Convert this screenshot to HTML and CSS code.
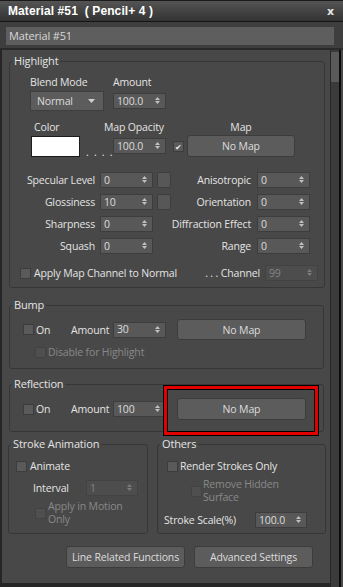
FILE: index.html
```html
<!DOCTYPE html>
<html lang="en">
<head>
    <meta charset="UTF-8">
    <meta name="viewport" content="width=device-width, initial-scale=1.0">
    <title>Material #51 - Pencil+ 4</title>
    <link rel="stylesheet" href="styles.css">
</head>
<body>

<div class="window">
    <div class="titlebar">
        <span class="title">Material #51&nbsp; ( Pencil+ 4 )</span>
        <span class="close">x</span>
    </div>
    <div class="namebar">
        <div class="namefield">Material #51</div>
    </div>

    <div class="main">
        <div class="panel">

            <fieldset class="group">
                <legend>Highlight</legend>
                <div class="hl-r1">
                    <span class="blend-lbl">Blend Mode</span>
                    <span>Amount</span>
                </div>
                <div class="hl-r2">
                    <div class="dropdown">Normal
                        <svg class="drop-arrow" viewBox="0 0 7 4"><path d="M0 0H7L3.5 4Z"/></svg>
                    </div>
                    <div class="spin amount-spin"><span>100.0</span><svg class="arrows" viewBox="0 0 5 9"><path d="M0 4L2.5 1L5 4ZM0 5L2.5 8L5 5Z"/></svg></div>
                </div>
                <div class="hl-r3">
                    <span class="color-lbl">Color</span>
                    <span class="opacity-lbl">Map Opacity</span>
                    <span class="map-lbl">Map</span>
                </div>
                <div class="hl-r4">
                    <div class="swatch"></div>
                    <span class="dots">. . . .</span>
                    <div class="spin opacity-spin"><span>100.0</span><svg class="arrows" viewBox="0 0 5 9"><path d="M0 4L2.5 1L5 4ZM0 5L2.5 8L5 5Z"/></svg></div>
                    <div class="cb checked">&#10004;</div>
                    <button class="btn map-btn">No Map</button>
                </div>

                <div class="params">
                    <span class="plbl">Specular Level</span>
                    <div class="spin"><span>0</span><svg class="arrows" viewBox="0 0 5 9"><path d="M0 4L2.5 1L5 4ZM0 5L2.5 8L5 5Z"/></svg></div>
                    <div class="mapbox"></div>
                    <span class="plbl right">Anisotropic</span>
                    <div class="spin"><span>0</span><svg class="arrows" viewBox="0 0 5 9"><path d="M0 4L2.5 1L5 4ZM0 5L2.5 8L5 5Z"/></svg></div>

                    <span class="plbl">Glossiness</span>
                    <div class="spin"><span>10</span><svg class="arrows" viewBox="0 0 5 9"><path d="M0 4L2.5 1L5 4ZM0 5L2.5 8L5 5Z"/></svg></div>
                    <div class="mapbox"></div>
                    <span class="plbl right">Orientation</span>
                    <div class="spin"><span>0</span><svg class="arrows" viewBox="0 0 5 9"><path d="M0 4L2.5 1L5 4ZM0 5L2.5 8L5 5Z"/></svg></div>

                    <span class="plbl">Sharpness</span>
                    <div class="spin"><span>0</span><svg class="arrows" viewBox="0 0 5 9"><path d="M0 4L2.5 1L5 4ZM0 5L2.5 8L5 5Z"/></svg></div>
                    <span></span>
                    <span class="plbl right">Diffraction Effect</span>
                    <div class="spin"><span>0</span><svg class="arrows" viewBox="0 0 5 9"><path d="M0 4L2.5 1L5 4ZM0 5L2.5 8L5 5Z"/></svg></div>

                    <span class="plbl">Squash</span>
                    <div class="spin"><span>0</span><svg class="arrows" viewBox="0 0 5 9"><path d="M0 4L2.5 1L5 4ZM0 5L2.5 8L5 5Z"/></svg></div>
                    <span></span>
                    <span class="plbl right">Range</span>
                    <div class="spin"><span>0</span><svg class="arrows" viewBox="0 0 5 9"><path d="M0 4L2.5 1L5 4ZM0 5L2.5 8L5 5Z"/></svg></div>
                </div>

                <div class="channel-row">
                    <div class="cb"></div>
                    <span class="cb-text">Apply Map Channel to Normal</span>
                    <span class="chan-lbl">. . . Channel</span>
                    <div class="spin disabled chan-spin"><span>99</span><svg class="arrows" viewBox="0 0 5 9"><path d="M0 4L2.5 1L5 4ZM0 5L2.5 8L5 5Z"/></svg></div>
                </div>
            </fieldset>

            <fieldset class="group bump">
                <legend>Bump</legend>
                <div class="map-row">
                    <div class="cb"></div>
                    <span class="on-lbl">On</span>
                    <span class="amt-lbl">Amount</span>
                    <div class="spin"><span>30</span><svg class="arrows" viewBox="0 0 5 9"><path d="M0 4L2.5 1L5 4ZM0 5L2.5 8L5 5Z"/></svg></div>
                    <button class="btn wide-btn">No Map</button>
                </div>
                <div class="disable-row">
                    <div class="cb disabled"></div>
                    <span class="cb-text dim">Disable for Highlight</span>
                </div>
            </fieldset>

            <fieldset class="group reflection">
                <legend>Reflection</legend>
                <div class="map-row refl-row">
                    <div class="cb"></div>
                    <span class="on-lbl">On</span>
                    <span class="amt-lbl">Amount</span>
                    <div class="spin"><span>100</span><svg class="arrows" viewBox="0 0 5 9"><path d="M0 4L2.5 1L5 4ZM0 5L2.5 8L5 5Z"/></svg></div>
                    <button class="btn wide-btn">No Map</button>
                </div>
            </fieldset>

            <div class="split">
                <fieldset class="group stroke-anim">
                    <legend>Stroke Animation</legend>
                    <div class="animate-row">
                        <div class="cb"></div>
                        <span class="cb-text">Animate</span>
                    </div>
                    <div class="interval-row">
                        <span class="interval-lbl">Interval</span>
                        <div class="spin disabled"><span>1</span><svg class="arrows" viewBox="0 0 5 9"><path d="M0 4L2.5 1L5 4ZM0 5L2.5 8L5 5Z"/></svg></div>
                    </div>
                    <div class="motion-row">
                        <div class="cb disabled"></div>
                        <span class="cb-text dim two-line">Apply in Motion<br>Only</span>
                    </div>
                </fieldset>

                <fieldset class="group others">
                    <legend>Others</legend>
                    <div class="render-row">
                        <div class="cb"></div>
                        <span class="cb-text">Render Strokes Only</span>
                    </div>
                    <div class="hidden-row">
                        <div class="cb disabled"></div>
                        <span class="cb-text dim two-line">Remove Hidden<br>Surface</span>
                    </div>
                    <div class="scale-row">
                        <span class="scale-lbl">Stroke Scale(%)</span>
                        <div class="spin"><span>100.0</span><svg class="arrows" viewBox="0 0 5 9"><path d="M0 4L2.5 1L5 4ZM0 5L2.5 8L5 5Z"/></svg></div>
                    </div>
                </fieldset>
            </div>

            <div class="footer">
                <button class="btn foot-btn">Line Related Functions</button>
                <button class="btn foot-btn">Advanced Settings</button>
            </div>

            <div class="callout"></div>
        </div>
        <div class="scroll"><div class="thumb"></div></div>
        <div class="edge"></div>
    </div>
</div>

</body>
</html>
```

FILE: styles.css
```css
* {
    box-sizing: border-box;
}
body {
    margin: 0;
    background-color: #1e1e1e;
    font-family: "Open Sans", "Noto Sans", sans-serif;
    font-size: 10.5px;
    letter-spacing: -0.15px;
    color: #e4e4e4;
}
.window {
    width: 343px;
    height: 587px;
    background-color: #262626;
    overflow: hidden;
}
.titlebar {
    height: 22px;
    display: flex;
    align-items: center;
    padding: 0 8px;
    border-top: 1px solid #1a1a1a;
    border-bottom: 1px solid #151515;
    background: linear-gradient(#545454, #333333);
}
.title {
    flex: 1;
    font-family: "Liberation Sans", Arial, sans-serif;
    font-weight: bold;
    font-size: 12px;
    letter-spacing: 0.1px;
    color: #ffffff;
}
.close {
    font-family: "DejaVu Sans", sans-serif;
    font-weight: bold;
    font-size: 11px;
    color: #e8e8e8;
    margin-right: 1px;
}
.namebar {
    height: 28px;
    padding: 5px 9px 0 6px;
    background-color: #3e3e3e;
    border-bottom: 2px solid #2a2a2a;
}
.namefield {
    height: 18px;
    line-height: 18px;
    padding-left: 3px;
    background-color: #5e5e5e;
    color: #d8d8d8;
    font-size: 11px;
}
.main {
    display: flex;
    height: 537px;
}
.panel {
    position: relative;
    width: 328px;
    height: 533px;
    margin-left: 2px;
    padding-top: 4px;
    background-color: #484848;
}
.scroll {
    width: 8px;
    margin-left: 1px;
    background-color: #3b3b3b;
}
.thumb {
    height: 30px;
    margin-top: 2px;
    background-color: #5a5a5a;
}
.edge {
    width: 4px;
    border-left: 2px solid #0c0c0c;
    background-color: #4a4a4a;
}

/* group boxes */
.group {
    min-width: 0;
    margin: 0 5px 0 7px;
    padding: 0 0 6px 0;
    border: 1px solid #363636;
    border-radius: 3px;
}
.group legend {
    margin-left: 2px;
    padding: 0 2px;
    line-height: 14px;
    font-size: 11px;
}
.bump {
    margin: 10px 6px 0 7px;
    padding-bottom: 9px;
}
.reflection {
    margin: 8px 6px 0 7px;
    padding-bottom: 11px;
}

/* common controls */
.spin {
    width: 53px;
    height: 16px;
    display: flex;
    align-items: center;
    justify-content: space-between;
    padding: 0 5px 1px 3px;
    background-color: #585858;
    border: 1px solid #3d3d3d;
    color: #dcdcdc;
}
.spin.disabled {
    background-color: #4d4d4d;
    border-color: #424242;
    color: #858585;
}
.arrows {
    width: 5px;
    height: 9px;
    fill: #c0c0c0;
}
.spin.disabled .arrows {
    fill: #7a7a7a;
}
.cb {
    width: 11px;
    height: 11px;
    flex-shrink: 0;
    background-color: #5a5a5a;
    border: 1px solid #3c3c3c;
}
.cb.disabled {
    background-color: #4f4f4f;
    border-color: #424242;
}
.cb.checked {
    font-size: 8px;
    line-height: 9px;
    text-align: center;
    color: #e8e8e8;
}
.cb-text {
    margin-left: 3px;
}
.dim {
    color: #888888;
}
.btn {
    padding: 0;
    font-family: "Open Sans", "Noto Sans", sans-serif;
    font-size: 10.5px;
    letter-spacing: -0.15px;
    color: #dddddd;
    background-color: #5c5c5c;
    border: 1px solid #3c3c3c;
    border-radius: 3px;
}

/* highlight group */
.hl-r1 {
    display: flex;
    height: 14px;
    margin-top: 7px;
    padding-left: 20px;
}
.blend-lbl {
    width: 83px;
}
.hl-r2 {
    display: flex;
    align-items: center;
    height: 20px;
    margin-top: 2px;
    padding-left: 20px;
}
.dropdown {
    width: 74px;
    height: 20px;
    display: flex;
    align-items: center;
    justify-content: space-between;
    padding: 0 8px 0 6px;
    background-color: #5c5c5c;
    border: 1px solid #3e3e3e;
    color: #dcdcdc;
}
.drop-arrow {
    width: 7px;
    height: 4px;
    fill: #cfcfcf;
}
.amount-spin {
    margin-left: 9px;
}
.hl-r3 {
    display: flex;
    height: 14px;
    margin-top: 9px;
    padding-left: 24px;
}
.color-lbl {
    width: 70px;
}
.opacity-lbl {
    width: 83px;
}
.map-lbl {
    width: 108px;
    text-align: center;
}
.hl-r4 {
    display: flex;
    align-items: center;
    height: 22px;
    margin-top: 1px;
    padding-left: 21px;
}
.swatch {
    width: 49px;
    height: 21px;
    background-color: #ffffff;
    border: 1px solid #1c1c1c;
}
.dots {
    width: 22px;
    margin-left: 6px;
    align-self: flex-end;
    line-height: 10px;
    letter-spacing: 1.2px;
    white-space: nowrap;
}
.opacity-spin {
    margin-left: 5px;
}
.hl-r4 .cb {
    margin-left: 7px;
}
.map-btn {
    width: 108px;
    height: 22px;
    margin-left: 3px;
}
.params {
    display: grid;
    grid-template-columns: 90px 57px 14px 86px 52px;
    grid-auto-rows: 16px;
    row-gap: 6px;
    margin-top: 15px;
}
.plbl {
    padding-right: 5px;
    text-align: right;
    line-height: 16px;
    white-space: nowrap;
}
.plbl.right {
    padding-right: 6px;
}
.params .spin {
    width: 53px;
}
.mapbox {
    width: 14px;
    height: 16px;
    background-color: #575757;
    border: 1px solid #3d3d3d;
    border-radius: 2px;
}
.channel-row {
    display: flex;
    align-items: center;
    height: 16px;
    margin-top: 11px;
    padding-left: 10px;
}
.chan-lbl {
    margin-left: auto;
}
.chan-spin {
    margin: 0 6px 0 5px;
}

/* bump and reflection */
.map-row {
    display: flex;
    align-items: center;
    height: 21px;
    margin-top: 7px;
    padding-left: 13px;
}
.refl-row {
    height: 22px;
}
.on-lbl {
    width: 35px;
    margin-left: 2px;
}
.amt-lbl {
    width: 42px;
}
.wide-btn {
    width: 129px;
    height: 21px;
    margin-left: 11px;
}
.refl-row .wide-btn {
    height: 22px;
}
.disable-row {
    display: flex;
    align-items: center;
    height: 14px;
    margin-top: 5px;
    padding-left: 25px;
}
.disable-row .cb-text {
    margin-left: 2px;
}

/* bottom groups */
.split {
    display: flex;
    gap: 9px;
    margin: 5px 0 0 6px;
}
.split .group {
    margin: 0;
    padding-bottom: 5px;
}
.stroke-anim {
    width: 140px;
}
.others {
    width: 169px;
}
.animate-row,
.render-row {
    display: flex;
    align-items: center;
    height: 14px;
    margin-top: 8px;
    padding-left: 7px;
}
.render-row {
    padding-left: 9px;
}
.render-row .cb-text {
    margin-left: 2px;
}
.interval-row {
    display: flex;
    align-items: center;
    height: 16px;
    margin-top: 7px;
    padding-left: 24px;
}
.interval-lbl {
    width: 53px;
}
.interval-row .spin {
    width: 52px;
}
.two-line {
    line-height: 13px;
}
.motion-row {
    display: flex;
    align-items: center;
    margin-top: 4px;
    padding-left: 26px;
}
.motion-row .cb-text {
    margin-left: 2px;
}
.hidden-row {
    display: flex;
    align-items: center;
    margin-top: 5px;
    padding-left: 33px;
}
.hidden-row .cb-text {
    margin-left: 1px;
}
.scale-row {
    display: flex;
    align-items: center;
    height: 16px;
    margin-top: 8px;
    padding-left: 6px;
}
.scale-lbl {
    width: 91px;
}
.scale-row .spin {
    width: 52px;
}

.footer {
    display: flex;
    justify-content: flex-end;
    gap: 9px;
    margin-top: 12px;
    padding-right: 17px;
}
.foot-btn {
    width: 119px;
    height: 22px;
}

/* red marker drawn over the reflection map button */
.callout {
    position: absolute;
    left: 162px;
    top: 336px;
    width: 154px;
    height: 49px;
    border: 3px solid #e10000;
    outline: 1px solid #000000;
    box-shadow: inset 0 0 0 1px #000000;
}
```
